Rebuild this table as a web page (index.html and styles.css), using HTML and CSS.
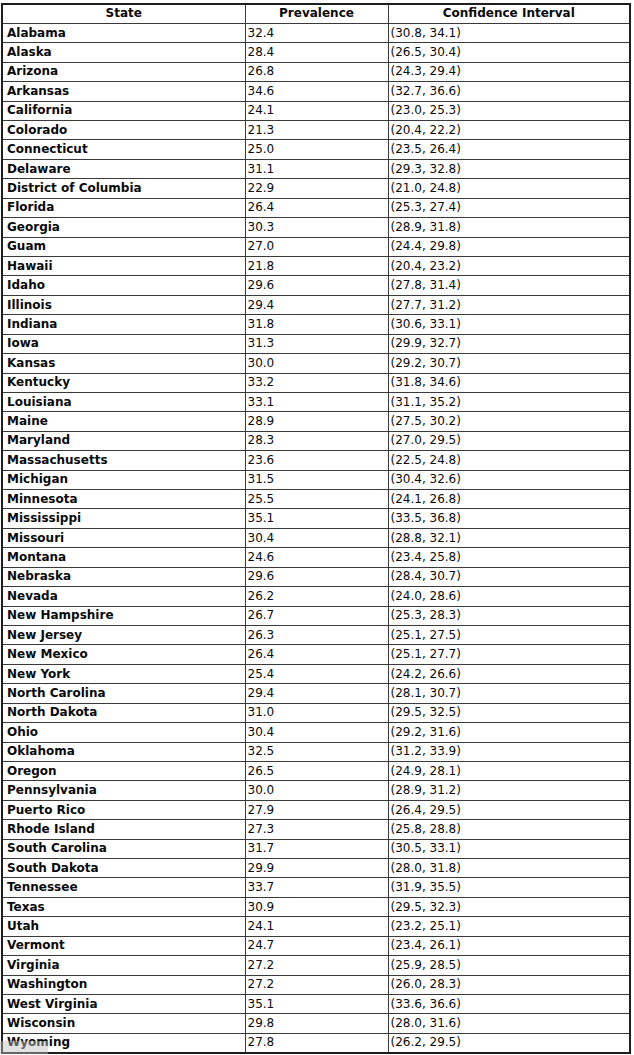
FILE: index.html
```html
<!DOCTYPE html>
<html>
<head>
<meta charset="utf-8">
<link rel="stylesheet" href="styles.css">
</head>
<body>
<table class="data">
<colgroup><col class="c1"><col class="c2"><col class="c3"></colgroup>
<thead>
<tr><th>State</th><th>Prevalence</th><th>Confidence Interval</th></tr>
</thead>
<tbody>
<tr><td class="st">Alabama</td><td>32.4</td><td>(30.8, 34.1)</td></tr>
<tr><td class="st">Alaska</td><td>28.4</td><td>(26.5, 30.4)</td></tr>
<tr><td class="st">Arizona</td><td>26.8</td><td>(24.3, 29.4)</td></tr>
<tr><td class="st">Arkansas</td><td>34.6</td><td>(32.7, 36.6)</td></tr>
<tr><td class="st">California</td><td>24.1</td><td>(23.0, 25.3)</td></tr>
<tr><td class="st">Colorado</td><td>21.3</td><td>(20.4, 22.2)</td></tr>
<tr><td class="st">Connecticut</td><td>25.0</td><td>(23.5, 26.4)</td></tr>
<tr><td class="st">Delaware</td><td>31.1</td><td>(29.3, 32.8)</td></tr>
<tr><td class="st">District of Columbia</td><td>22.9</td><td>(21.0, 24.8)</td></tr>
<tr><td class="st">Florida</td><td>26.4</td><td>(25.3, 27.4)</td></tr>
<tr><td class="st">Georgia</td><td>30.3</td><td>(28.9, 31.8)</td></tr>
<tr><td class="st">Guam</td><td>27.0</td><td>(24.4, 29.8)</td></tr>
<tr><td class="st">Hawaii</td><td>21.8</td><td>(20.4, 23.2)</td></tr>
<tr><td class="st">Idaho</td><td>29.6</td><td>(27.8, 31.4)</td></tr>
<tr><td class="st">Illinois</td><td>29.4</td><td>(27.7, 31.2)</td></tr>
<tr><td class="st">Indiana</td><td>31.8</td><td>(30.6, 33.1)</td></tr>
<tr><td class="st">Iowa</td><td>31.3</td><td>(29.9, 32.7)</td></tr>
<tr><td class="st">Kansas</td><td>30.0</td><td>(29.2, 30.7)</td></tr>
<tr><td class="st">Kentucky</td><td>33.2</td><td>(31.8, 34.6)</td></tr>
<tr><td class="st">Louisiana</td><td>33.1</td><td>(31.1, 35.2)</td></tr>
<tr><td class="st">Maine</td><td>28.9</td><td>(27.5, 30.2)</td></tr>
<tr><td class="st">Maryland</td><td>28.3</td><td>(27.0, 29.5)</td></tr>
<tr><td class="st">Massachusetts</td><td>23.6</td><td>(22.5, 24.8)</td></tr>
<tr><td class="st">Michigan</td><td>31.5</td><td>(30.4, 32.6)</td></tr>
<tr><td class="st">Minnesota</td><td>25.5</td><td>(24.1, 26.8)</td></tr>
<tr><td class="st">Mississippi</td><td>35.1</td><td>(33.5, 36.8)</td></tr>
<tr><td class="st">Missouri</td><td>30.4</td><td>(28.8, 32.1)</td></tr>
<tr><td class="st">Montana</td><td>24.6</td><td>(23.4, 25.8)</td></tr>
<tr><td class="st">Nebraska</td><td>29.6</td><td>(28.4, 30.7)</td></tr>
<tr><td class="st">Nevada</td><td>26.2</td><td>(24.0, 28.6)</td></tr>
<tr><td class="st">New Hampshire</td><td>26.7</td><td>(25.3, 28.3)</td></tr>
<tr><td class="st">New Jersey</td><td>26.3</td><td>(25.1, 27.5)</td></tr>
<tr><td class="st">New Mexico</td><td>26.4</td><td>(25.1, 27.7)</td></tr>
<tr><td class="st">New York</td><td>25.4</td><td>(24.2, 26.6)</td></tr>
<tr><td class="st">North Carolina</td><td>29.4</td><td>(28.1, 30.7)</td></tr>
<tr><td class="st">North Dakota</td><td>31.0</td><td>(29.5, 32.5)</td></tr>
<tr><td class="st">Ohio</td><td>30.4</td><td>(29.2, 31.6)</td></tr>
<tr><td class="st">Oklahoma</td><td>32.5</td><td>(31.2, 33.9)</td></tr>
<tr><td class="st">Oregon</td><td>26.5</td><td>(24.9, 28.1)</td></tr>
<tr><td class="st">Pennsylvania</td><td>30.0</td><td>(28.9, 31.2)</td></tr>
<tr><td class="st">Puerto Rico</td><td>27.9</td><td>(26.4, 29.5)</td></tr>
<tr><td class="st">Rhode Island</td><td>27.3</td><td>(25.8, 28.8)</td></tr>
<tr><td class="st">South Carolina</td><td>31.7</td><td>(30.5, 33.1)</td></tr>
<tr><td class="st">South Dakota</td><td>29.9</td><td>(28.0, 31.8)</td></tr>
<tr><td class="st">Tennessee</td><td>33.7</td><td>(31.9, 35.5)</td></tr>
<tr><td class="st">Texas</td><td>30.9</td><td>(29.5, 32.3)</td></tr>
<tr><td class="st">Utah</td><td>24.1</td><td>(23.2, 25.1)</td></tr>
<tr><td class="st">Vermont</td><td>24.7</td><td>(23.4, 26.1)</td></tr>
<tr><td class="st">Virginia</td><td>27.2</td><td>(25.9, 28.5)</td></tr>
<tr><td class="st">Washington</td><td>27.2</td><td>(26.0, 28.3)</td></tr>
<tr><td class="st">West Virginia</td><td>35.1</td><td>(33.6, 36.6)</td></tr>
<tr><td class="st">Wisconsin</td><td>29.8</td><td>(28.0, 31.6)</td></tr>
<tr><td class="st">Wyoming</td><td>27.8</td><td>(26.2, 29.5)</td></tr>
</tbody>
</table>
<div class="watermark"></div>
</body>
</html>
```
FILE: styles.css
```css
html, body {
  margin: 0;
  padding: 0;
  background: #ffffff;
}
body {
  padding: 3px 0 0 1px;
  position: relative;
}
.data {
  border-collapse: collapse;
  table-layout: fixed;
  width: 628px;
  font-family: "DejaVu Sans", Verdana, sans-serif;
  font-size: 12px;
  color: #0a0a0a;
  border: 2px solid #1e1e1e;
}
.c1 { width: 243px; }
.c2 { width: 143px; }
.c3 { width: 242px; }
.data th,
.data td {
  border: 1px solid #3a3a3a;
  height: 19.43px;
  padding: 0 2px;
  line-height: 17px;
  box-sizing: border-box;
  white-space: nowrap;
  vertical-align: middle;
}
.data th {
  font-weight: bold;
  text-align: center;
}
.data td {
  text-align: left;
}
.data td.st {
  font-weight: bold;
  padding-left: 4px;
}
.watermark {
  position: absolute;
  left: 0;
  top: 1041px;
  width: 48px;
  height: 14px;
  background: rgba(190, 190, 190, 0.45);
}
```
